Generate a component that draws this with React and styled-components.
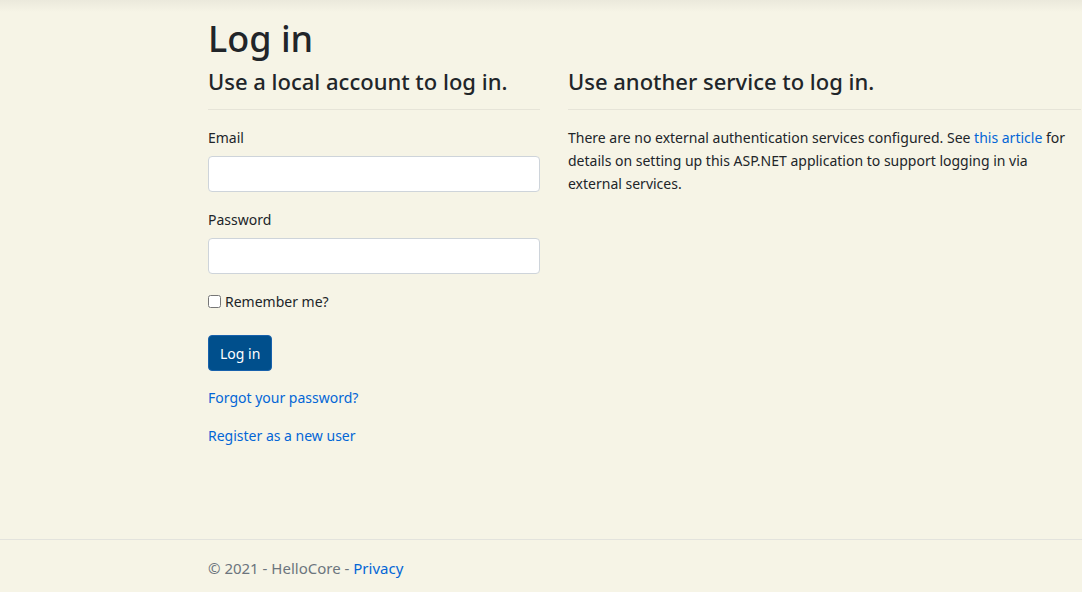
import React from "react";
import styled, { createGlobalStyle } from "styled-components";

const GlobalStyle = createGlobalStyle`
  * { box-sizing: border-box; }
  body {
    margin: 0;
    background: #f6f4e6;
    color: #212529;
    font-family: "Segoe UI", "Noto Sans", "Open Sans", sans-serif;
    font-size: 14px;
    line-height: 23px;
  }
`;

const Page = styled.div`
  display: flex;
  flex-direction: column;
  min-height: 100vh;
  background: linear-gradient(#ebe9dc, #f6f4e6 12px);
`;

const Main = styled.main`
  flex: 1;
  padding: 17px 1px 0 208px;
`;

const Title = styled.h1`
  margin: 0 0 8px;
  font-size: 36px;
  font-weight: 500;
  line-height: 44px;
`;

const Columns = styled.div`
  display: grid;
  grid-template-columns: minmax(0, 332fr) minmax(0, 513fr);
  column-gap: 28px;
`;

const Subtitle = styled.h2`
  margin: 0;
  padding-bottom: 16px;
  border-bottom: 1px solid #e6e4d8;
  font-size: 22px;
  font-weight: 500;
  line-height: 24px;
  white-space: nowrap;
`;

const Note = styled.p`
  margin: 16px 0 0;
`;

const Form = styled.form`
  margin-top: 16px;
`;

const Field = styled.div`
  margin-bottom: 16px;
`;

const Label = styled.label`
  display: block;
  margin-bottom: 7px;
`;

const Input = styled.input`
  display: block;
  width: 100%;
  height: 36px;
  padding: 6px 12px;
  border: 1px solid #ced4da;
  border-radius: 4px;
  background: #fff;
  font: inherit;
`;

const CheckLabel = styled.label`
  display: flex;
  align-items: center;
  gap: 4px;
  margin-bottom: 22px;
`;

const Checkbox = styled.input`
  width: 13px;
  height: 13px;
  margin: 0;
`;

const Button = styled.button`
  display: block;
  height: 36px;
  padding: 0 11px;
  border: 1px solid #1861ac;
  border-radius: 4px;
  background: #004f8c;
  color: #fff;
  font: inherit;
`;

const Link = styled.a`
  color: #0366d6;
  text-decoration: none;
`;

const LinkRow = styled.p`
  margin: 15px 0 0;
`;

const Footer = styled.footer`
  padding: 17px 0 12px 208px;
  border-top: 1px solid #e3e3dd;
  color: #6c757d;
  font-size: 15px;
`;

export default function App() {
  return (
    <>
      <GlobalStyle />
      <Page>
        <Main>
          <Title>Log in</Title>
          <Columns>
            <section>
              <Subtitle>Use a local account to log in.</Subtitle>
              <Form onSubmit={(event) => event.preventDefault()}>
                <Field>
                  <Label htmlFor="email">Email</Label>
                  <Input id="email" type="email" />
                </Field>
                <Field>
                  <Label htmlFor="password">Password</Label>
                  <Input id="password" type="password" />
                </Field>
                <CheckLabel>
                  <Checkbox type="checkbox" />
                  Remember me?
                </CheckLabel>
                <Button type="submit">Log in</Button>
                <LinkRow><Link href="#forgot">Forgot your password?</Link></LinkRow>
                <LinkRow><Link href="#register">Register as a new user</Link></LinkRow>
              </Form>
            </section>
            <section>
              <Subtitle>Use another service to log in.</Subtitle>
              <Note>
                There are no external authentication services configured. See{" "}
                <Link href="#article">this article</Link> for details on setting up this
                ASP.NET application to support logging in via external services.
              </Note>
            </section>
          </Columns>
        </Main>
        <Footer>
          © 2021 - HelloCore - <Link href="#privacy">Privacy</Link>
        </Footer>
      </Page>
    </>
  );
}
